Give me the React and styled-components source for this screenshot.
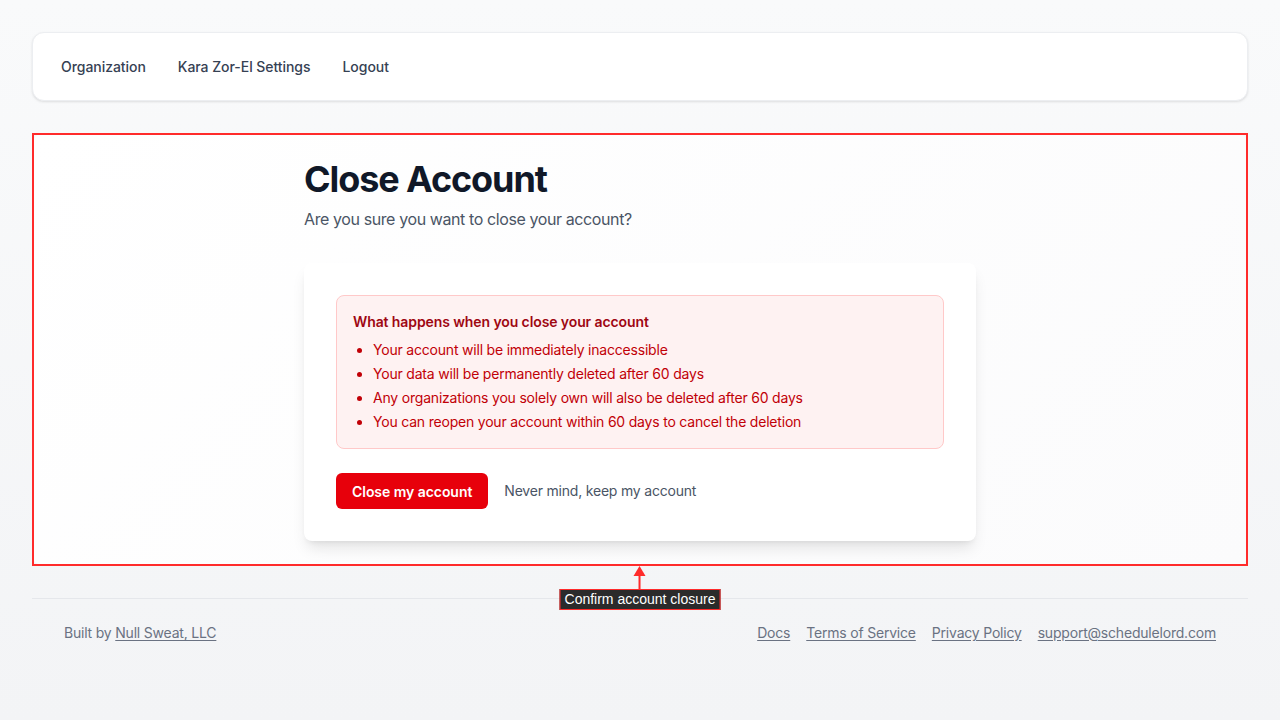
import React from 'react'
import styled, { createGlobalStyle } from 'styled-components'

const GlobalStyle = createGlobalStyle`
    html, body {
        margin: 0;
        min-height: 100%;
    }
    body {
        font-family: Inter, "Noto Sans", sans-serif;
        background: linear-gradient(180deg, #f9fafb 0%, #f3f4f6 100%);
        min-height: 720px;
        -webkit-font-smoothing: antialiased;
    }
    * { box-sizing: border-box; }
`

const Page = styled.div`
    padding: 32px;
    display: flex;
    flex-direction: column;
    gap: 32px;
`

const Nav = styled.nav`
    display: flex;
    align-items: center;
    padding: 16px 12px 15px;
    background: #fff;
    border: 1px solid #eceef1;
    border-radius: 12px;
    box-shadow: 0 1px 3px rgba(0, 0, 0, 0.08), 0 1px 2px rgba(0, 0, 0, 0.04);
`

const NavLink = styled.a`
    padding: 8px 16px;
    font-size: 14px;
    line-height: 20px;
    font-weight: 500;
    letter-spacing: -0.05px;
    color: #364153;
    text-decoration: none;
`

const Main = styled.main`
    position: relative;
    padding: 26px 32px 25px;
    border-radius: 12px;
    background: linear-gradient(135deg, #ffffff 0%, #fbfbfc 100%);
`

const Column = styled.div`
    max-width: 672px;
    margin: 0 auto;
`

const Title = styled.h1`
    margin: 0;
    font-size: 36px;
    line-height: 40px;
    font-weight: 700;
    letter-spacing: -1.1px;
    color: #101828;
`

const Subtitle = styled.p`
    margin: 8px 0 32px;
    font-size: 16px;
    line-height: 24px;
    letter-spacing: -0.4px;
    color: #4a5565;
`

const Card = styled.section`
    background: #fff;
    border-radius: 8px;
    padding: 32px;
    box-shadow: 0 10px 15px -3px rgba(0, 0, 0, 0.1), 0 4px 6px -4px rgba(0, 0, 0, 0.1);
`

const Alert = styled.div`
    background: #fef2f2;
    border: 1px solid #ffc9c9;
    border-radius: 8px;
    padding: 16px;
`

const AlertTitle = styled.h3`
    margin: 0;
    font-size: 14px;
    line-height: 20px;
    font-weight: 600;
    letter-spacing: -0.1px;
    color: #9f0712;
`

const List = styled.ul`
    margin: 8px 0 0;
    padding-left: 20px;
    list-style: disc;
    display: flex;
    flex-direction: column;
    gap: 4px;
    li {
        font-size: 14px;
        line-height: 20px;
        letter-spacing: -0.2px;
        color: #c10007;
    }
`

const Actions = styled.div`
    display: flex;
    align-items: center;
    gap: 16px;
    margin-top: 24px;
`

const DangerButton = styled.button`
    height: 36px;
    padding: 0 16px;
    border: none;
    border-radius: 6px;
    background: #e7000b;
    color: #fff;
    font-family: inherit;
    font-size: 14px;
    font-weight: 600;
    letter-spacing: -0.05px;
    cursor: pointer;
`

const TextLink = styled.a`
    font-size: 14px;
    line-height: 20px;
    letter-spacing: -0.2px;
    color: #4a5565;
    text-decoration: none;
`

const Highlight = styled.div`
    position: absolute;
    inset: 0;
    border: 2px solid #ff2b2b;
    pointer-events: none;
`

const Callout = styled.div`
    position: absolute;
    left: 50%;
    top: 100%;
    transform: translateX(-50%);
    display: flex;
    flex-direction: column;
    align-items: center;
    pointer-events: none;
`

const Arrow = styled.svg`
    display: block;
`

const CalloutLabel = styled.span`
    display: block;
    padding: 1px 4px 2px;
    background: #2b2b2b;
    border: 1px solid #ff2b2b;
    color: #fff;
    font-family: "Liberation Sans", Arial, sans-serif;
    font-size: 14px;
    line-height: 16px;
    white-space: nowrap;
`

const Footer = styled.footer`
    display: flex;
    justify-content: space-between;
    align-items: center;
    padding: 24px 32px;
    border-top: 1px solid #e5e7eb;
    font-size: 14px;
    line-height: 20px;
    letter-spacing: -0.2px;
    color: #6a7282;
`

const FooterLinks = styled.div`
    display: flex;
    gap: 16px;
`

const FooterLink = styled.a`
    color: #6a7282;
    text-decoration: underline;
    text-underline-offset: 2px;
`

const consequences = [
    'Your account will be immediately inaccessible',
    'Your data will be permanently deleted after 60 days',
    'Any organizations you solely own will also be deleted after 60 days',
    'You can reopen your account within 60 days to cancel the deletion',
]

function App() {
    return (
        <>
            <GlobalStyle />
            <Page>
                <Nav>
                    <NavLink href="#">Organization</NavLink>
                    <NavLink href="#">Kara Zor-El Settings</NavLink>
                    <NavLink href="#">Logout</NavLink>
                </Nav>

                <Main>
                    <Column>
                        <Title>Close Account</Title>
                        <Subtitle>Are you sure you want to close your account?</Subtitle>
                        <Card>
                            <Alert>
                                <AlertTitle>What happens when you close your account</AlertTitle>
                                <List>
                                    {consequences.map(item => <li key={item}>{item}</li>)}
                                </List>
                            </Alert>
                            <Actions>
                                <DangerButton type="button">Close my account</DangerButton>
                                <TextLink href="#">Never mind, keep my account</TextLink>
                            </Actions>
                        </Card>
                    </Column>
                    <Highlight />
                    <Callout>
                        <Arrow width="14" height="23" viewBox="0 0 14 23">
                            <polygon points="7,0 1,10 13,10" fill="#ff2b2b" />
                            <rect x="6" y="9" width="2" height="14" fill="#ff2b2b" />
                        </Arrow>
                        <CalloutLabel>Confirm account closure</CalloutLabel>
                    </Callout>
                </Main>

                <Footer>
                    <span>Built by <FooterLink href="#">Null Sweat, LLC</FooterLink></span>
                    <FooterLinks>
                        <FooterLink href="#">Docs</FooterLink>
                        <FooterLink href="#">Terms of Service</FooterLink>
                        <FooterLink href="#">Privacy Policy</FooterLink>
                        <FooterLink href="#">support@schedulelord.com</FooterLink>
                    </FooterLinks>
                </Footer>
            </Page>
        </>
    )
}

export default App
